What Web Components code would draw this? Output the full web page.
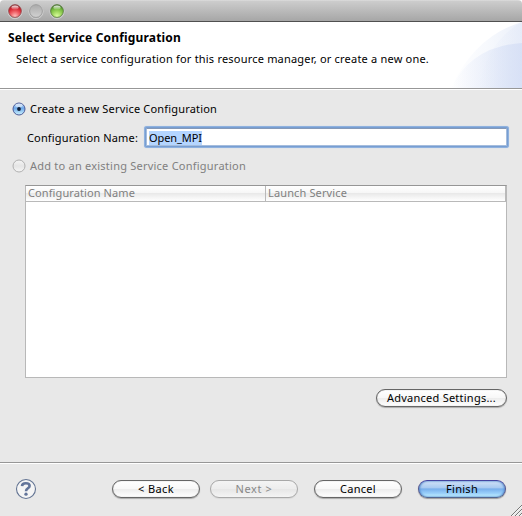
<!DOCTYPE html>
<html lang="en"><head><meta charset="utf-8"><title>Select Service Configuration</title>
<style>
html,body{margin:0;width:522px;height:516px;overflow:hidden;background:#fff}
body{font:11px/16px "Noto Sans","Open Sans",sans-serif;color:#000}
</style></head><body>
<wizard-window></wizard-window>
<script>
const define=(name,html,setup)=>customElements.define(name,class extends HTMLElement{
  connectedCallback(){
    if(this.shadowRoot)return;
    const t=document.createElement('template');t.innerHTML=html;
    this.attachShadow({mode:'open'}).append(t.content.cloneNode(true));
    if(setup)setup(this,this.shadowRoot);
  }
});
/* A single-line label whose tracking is adjusted to a set width. */
define('fit-label',`<style>:host{display:block;white-space:pre;line-height:16px;flex:none}span{display:inline-block}</style><span><slot></slot></span>`,
(host,root)=>{
  const s=root.querySelector('span'),w=+host.getAttribute('w'),n=host.textContent.length;
  host.style.width=w+'px';
  s.style.letterSpacing=((w-s.getBoundingClientRect().width)/n).toFixed(3)+'px';
});
define('traffic-lights',`<style>:host{display:block;height:21px}svg{display:block}</style>
<svg width="80" height="21"><defs>
<radialGradient id="r" cx=".5" cy=".9" r=".85"><stop offset="0" stop-color="#ffc0bd"/><stop offset=".4" stop-color="#f0646a"/><stop offset=".75" stop-color="#d6222e"/><stop offset="1" stop-color="#8d2a30"/></radialGradient>
<radialGradient id="g" cx=".5" cy=".9" r=".85"><stop offset="0" stop-color="#dcffa0"/><stop offset=".4" stop-color="#a3da62"/><stop offset=".75" stop-color="#6eb43a"/><stop offset="1" stop-color="#3f6f28"/></radialGradient>
<linearGradient id="n" x2="0" y2="1"><stop offset="0" stop-color="#aaa"/><stop offset=".45" stop-color="#bcbcbc"/><stop offset="1" stop-color="#d2d2d2"/></linearGradient>
<linearGradient id="h" x2="0" y2="1"><stop offset="0" stop-color="#fff" stop-opacity=".9"/><stop offset="1" stop-color="#fff" stop-opacity=".1"/></linearGradient></defs>
<g fill="none" stroke="#fff" stroke-opacity=".4"><circle cx="15" cy="11.7" r="7"/><circle cx="36" cy="11.7" r="7"/><circle cx="57" cy="11.7" r="7"/></g>
<circle cx="15" cy="11" r="6.4" fill="url(#r)" stroke="#8d4a4d" stroke-width=".8"/>
<circle cx="36" cy="11" r="6.4" fill="url(#n)" stroke="#959595" stroke-width=".8"/>
<circle cx="57" cy="11" r="6.4" fill="url(#g)" stroke="#587a3f" stroke-width=".8"/>
<g fill="url(#h)"><ellipse cx="15" cy="7.5" rx="3.6" ry="2.1"/><ellipse cx="57" cy="7.5" rx="3.6" ry="2.1"/></g></svg>`);
define('title-bar',`<style>:host{display:block;height:21px;border-bottom:1px solid #505050;background:linear-gradient(#e2e2e2 0,#cdcdcd 1px,#a6a6a6 21px);border-radius:4px 4px 0 0}</style><traffic-lights></traffic-lights>`);
define('wizard-banner',`<style>:host{display:grid;grid-template-columns:450px 72px;height:66px;background:#fff;border-bottom:1px solid #979797}
.t{padding:8px 0 0 8px}.t b{display:block;font-size:12px;height:21px}.sub{padding-left:8px}svg{display:block}</style>
<div class="t"><b><fit-label w="173">Select Service Configuration</fit-label></b><fit-label class="sub" w="413">Select a service configuration for this resource manager, or create a new one.</fit-label></div>
<svg width="72" height="66"><defs><linearGradient id="a"><stop offset="0" stop-color="#fff"/><stop offset=".5" stop-color="#f7f9fd"/><stop offset="1" stop-color="#ebf0fa"/></linearGradient>
<linearGradient id="b"><stop offset="0" stop-color="#d3ddf5" stop-opacity="0"/><stop offset=".4" stop-color="#d3ddf5" stop-opacity=".25"/><stop offset="1" stop-color="#d3ddf5" stop-opacity=".75"/></linearGradient></defs>
<path d="M1 66Q25 14 72 0V66Z" fill="url(#a)"/><path d="M28 66Q38 18 72 0V66Z" fill="url(#b)" opacity=".3"/><path d="M1 66Q22 24 72 21V66Z" fill="url(#b)"/></svg>`);
define('radio-option',`<style>:host{display:flex;height:16px;align-items:center}svg{flex:none;width:14px;height:14px;margin-right:4px}:host([disabled]){color:#808080}:host([disabled]) .on,:host(:not([disabled])) .off{display:none}</style>
<svg class="on" viewBox="0 0 14 14"><defs><linearGradient id="a" x2="0" y2="1"><stop offset="0" stop-color="#b5d0f2"/><stop offset=".45" stop-color="#70aaea"/><stop offset="1" stop-color="#d1f6ff"/></linearGradient></defs><circle cx="7" cy="7" r="6" fill="url(#a)" stroke="#4c5a98"/><ellipse cx="7" cy="3.4" rx="3.7" ry="1.8" fill="#fff" opacity=".5"/><circle cx="7" cy="7" r="1.9" fill="#102038"/></svg>
<svg class="off" viewBox="0 0 14 14"><defs><linearGradient id="c" x2="0" y2="1"><stop offset="0" stop-color="#f5f5f5"/><stop offset=".5" stop-color="#e5e5e5"/><stop offset="1" stop-color="#f6f6f6"/></linearGradient></defs><circle cx="7" cy="7" r="6" fill="url(#c)" stroke="#b0b0b0"/></svg><slot></slot>`);
define('text-field',`<style>:host{display:flex;box-sizing:border-box;width:361px;height:18px;background:#fff;border:1px solid #a5bddd;border-top-color:#8599b8;box-shadow:0 0 0 1px #779ed2,0 0 0 2px #8fb1de,0 0 1px 2px #adc5e6;border-radius:1px;align-items:flex-end;padding-left:2px}
.s{background:#b4d5ff;height:14px;margin-bottom:.5px;display:flex;align-items:center}</style><div class="s"><slot></slot></div>`);
define('data-table',`<style>:host{display:block;box-sizing:border-box;width:482px;height:193px;border:1px solid #b8b8b8;border-top-color:#969696;background:#fff}
.h{display:grid;grid-template-columns:240px 240px;height:15px;border-bottom:1px solid #b9b9b9;color:#808080;background:linear-gradient(#fff 0,#f6f6f6 48%,#e9e9e9 50%,#fff 100%)}
.h div{border-right:1px solid #b9b9b9;padding-left:2px}fit-label{line-height:13px}</style>
<div class="h"><div><fit-label w="107">Configuration Name</fit-label></div><div><fit-label w="79">Launch Service</fit-label></div></div>`);
define('push-button',`<style>:host{display:flex;box-sizing:border-box;width:88px;height:18px;border:1px solid #666;border-radius:9px;align-items:center;justify-content:center;background:linear-gradient(#fff 0,#f8f8f8 47%,#ececec 50%,#fff 100%);box-shadow:0 1px 1px #0004,inset 0 0 1px #999;flex:none}
:host([wide]){width:131px}:host([disabled]){color:#888;border-color:#a8a8a8;background:linear-gradient(#f4f4f4,#ededed 48%,#e6e6e6 50%,#f4f4f4);box-shadow:0 1px 1px #0001}
:host([primary]){border-color:#4444a0 #52568f #53668f;background:linear-gradient(#d2e2f7 0,#a9caf1 42%,#78afec 50%,#9bd1fa 78%,#c9f5ff 100%);box-shadow:0 1px 1px #0005,inset 1px 0 2px #5a90d0,inset -1px 0 2px #5a90d0}</style><slot></slot>`);
define('help-icon',`<style>:host{display:block;width:22px;height:22px}svg{display:block}</style><svg width="22" height="22" fill="none"><circle cx="11" cy="11" r="9.5" fill="#f5f5f5" stroke="#637493" stroke-width="1.1"/><path d="M7 8.1C7.1 5.9 8.7 5.2 10.8 5.2C13.2 5.2 14.6 6.1 14.6 7.9C14.6 10.4 11 10.2 11 13.2" stroke="#63759a" stroke-width="2.6"/><circle cx="11" cy="16.2" r="1.65" fill="#63759a"/></svg>`);
define('resize-grip',`<style>:host{display:block;position:absolute;right:0;bottom:0;width:13px;height:13px}svg{display:block}</style><svg width="13" height="13"><path d="M2 13L13 2M6 13L13 6M10 13L13 10" stroke="#777"/><path d="M3 13L13 3M7 13L13 7M11 13L13 11" stroke="#fff" stroke-width=".6"/></svg>`);
define('wizard-window',`<style>:host{display:grid;grid-template-rows:22px 67px 1fr 54px;width:522px;height:516px;position:relative}
main{background:#e8e8e8;border-top:1px solid #fff;padding:11px 15px 0 12px;box-sizing:border-box}
.field{display:flex;align-items:flex-end;height:18px;margin:11px 0 12px 15px;gap:8px}
data-table{margin:11px 0 11px 13px}.adv{display:flex;justify-content:flex-end}
footer{box-sizing:border-box;background:#e8e8e8;border-top:1px solid #979797;box-shadow:inset 0 1px #fff;display:flex;padding:17px 16px 0 15px}
help-icon{margin-top:-2px}.b{display:flex;margin-left:auto}</style>
<title-bar></title-bar><wizard-banner></wizard-banner>
<main><radio-option><fit-label w="187">Create a new Service Configuration</fit-label></radio-option>
<div class="field"><fit-label w="111">Configuration Name:</fit-label><text-field><fit-label w="53">Open_MPI</fit-label></text-field></div>
<radio-option disabled><fit-label w="216">Add to an existing Service Configuration</fit-label></radio-option>
<data-table></data-table><div class="adv"><push-button wide><fit-label w="109">Advanced Settings...</fit-label></push-button></div></main>
<footer><help-icon></help-icon><div class="b"><push-button><fit-label w="36">&lt; Back</fit-label></push-button><push-button disabled style="margin-left:10px"><fit-label w="37">Next &gt;</fit-label></push-button><push-button style="margin-left:16px"><fit-label w="36">Cancel</fit-label></push-button><push-button primary style="margin-left:16px"><fit-label w="32">Finish</fit-label></push-button></div></footer><resize-grip></resize-grip>`);
</script></body></html>
